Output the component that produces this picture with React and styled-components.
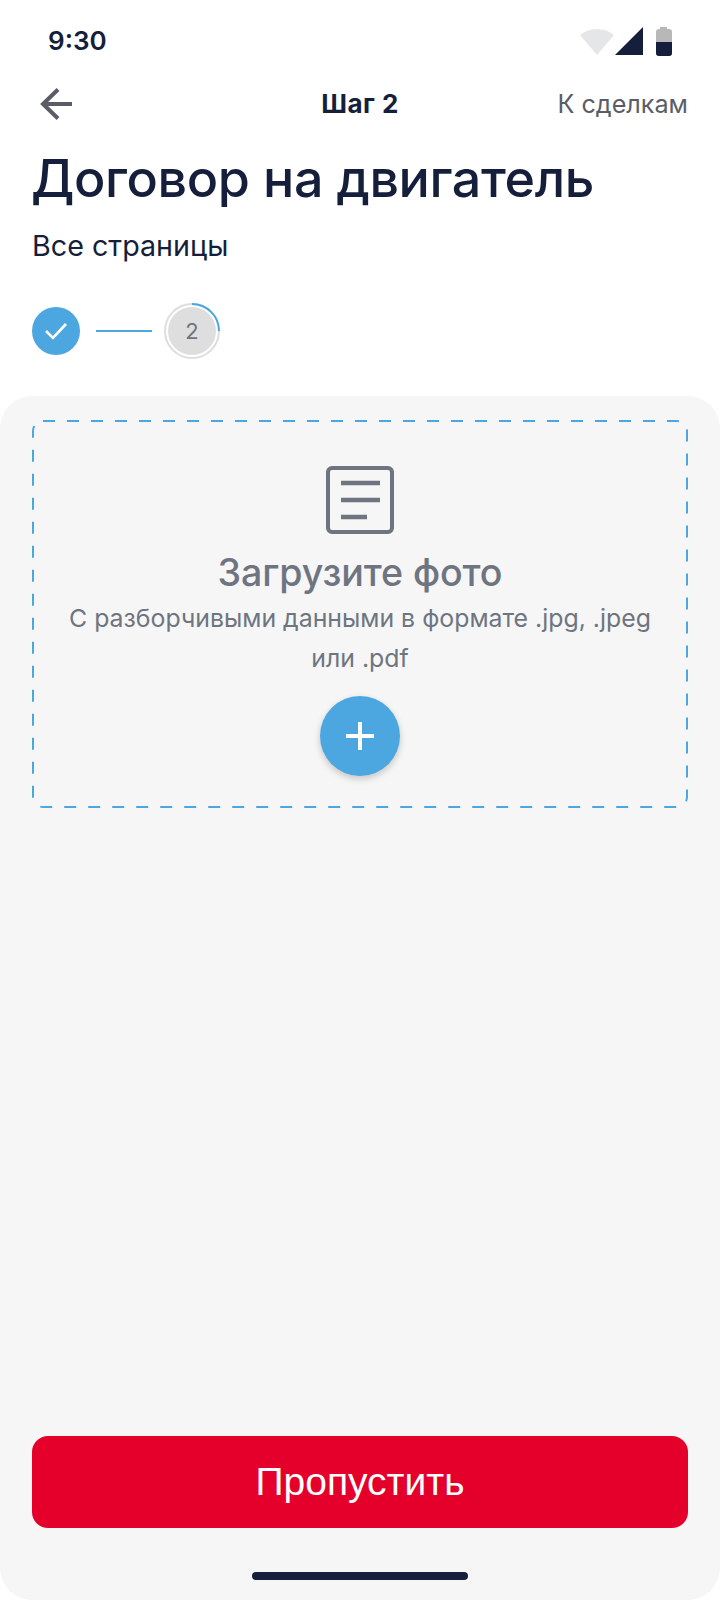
import React from "react";
import styled, { createGlobalStyle } from "styled-components";

const Global = createGlobalStyle`
  html, body { margin: 0; padding: 0; background: #fff; }
  * { box-sizing: border-box; }
  body { font-family: Inter, "Liberation Sans", sans-serif; -webkit-font-smoothing: antialiased; }
`;
const Page = styled.div`
  width: 720px; height: 1600px; display: flex; flex-direction: column; background: #fff; color: #151e3a;
`;
const StatusBar = styled.div`
  height: 84px; padding: 26px 48px 0 48px; display: flex; justify-content: space-between; align-items: flex-start;
`;
const Clock = styled.div`
  font-size: 26px; line-height: 30px; font-weight: 600;
`;
const NavBar = styled.div`
  height: 40px; padding: 0 32px 0 40px; display: grid; grid-template-columns: 150px 1fr 150px; align-items: center;
`;
const BackLink = styled.button`
  border: 0; background: none; padding: 0; width: 32px; height: 32px; display: block;
`;
const StepName = styled.div`
  font-size: 26px; font-weight: 700; line-height: 32px; text-align: center; letter-spacing: 0.5px; padding-right: 8px;
`;
const DealsLink = styled.div`
  justify-self: end; font-size: 25.2px; line-height: 32px; color: #5a5d66; white-space: nowrap;
`;
const Title = styled.h1`
  margin: 23px 0 0 -1px; padding: 0 32px; font-size: 52px; line-height: 64px; font-weight: 500; letter-spacing: -0.4px;
  white-space: nowrap;
`;
const Subtitle = styled.div`
  margin-top: 17px; padding: 0 32px; font-size: 28.7px; line-height: 36px;
`;
const Stepper = styled.div`
  margin-top: 37px; padding: 0 32px; display: flex; align-items: center; height: 60px;
`;
const DoneStep = styled.div`
  width: 48px; height: 48px; border-radius: 50%; background: #4ca7e0; display: flex; align-items: center; justify-content: center;
`;
const Connector = styled.div`
  width: 56px; height: 2px; margin: 0 12px 0 16px; background: #4ca7e0;
`;
const CurrentStep = styled.div`
  position: relative; width: 56px; height: 56px; display: flex; align-items: center; justify-content: center;
`;
const Ring = styled.svg`
  position: absolute; inset: 0;
`;
const StepNumber = styled.div`
  width: 48px; height: 48px; border-radius: 50%; background: #dedede; color: #6e7580;
  font-size: 22px; display: flex; align-items: center; justify-content: center;
`;
const Panel = styled.div`
  margin-top: 35px; flex: 1; background: #f6f6f6; border-radius: 32px; padding: 24px 32px 20px;
  display: flex; flex-direction: column;
`;
const Dropzone = styled.div`
  position: relative; height: 388px; padding-top: 46px; display: flex; flex-direction: column; align-items: center;
`;
const DashedOutline = styled.svg`
  position: absolute; inset: 0;
`;
const DropTitle = styled.div`
  margin-top: 17px; font-size: 37.6px; line-height: 44px; font-weight: 500; color: #6e7580; letter-spacing: -0.1px;
`;
const DropText = styled.div`
  width: 620px; margin-top: 3px; font-size: 24.85px; line-height: 40px; text-align: center; color: #6e7580;
`;
const AddButton = styled.button`
  margin-top: 18px; width: 80px; height: 80px; border: 0; border-radius: 50%; padding: 0; background: #4ca7e0;
  box-shadow: 0 3px 7px rgba(0,0,0,.2); display: flex; align-items: center; justify-content: center;
`;
const SkipButton = styled.button`
  margin-top: auto; width: 100%; height: 92px; border: 0; border-radius: 16px; background: #e4002b; color: #fff;
  font-family: "Liberation Sans", Arial, sans-serif; font-size: 39px;
`;
const HomeBar = styled.div`
  margin: 44px auto 0; width: 216px; height: 8px; border-radius: 4px; background: #151e3a;
`;

export default function App() {
  return (
    <Page>
      <Global />
      <StatusBar>
        <Clock>9:30</Clock>
        <svg width="92" height="32" viewBox="0 0 92 32">
          <path d="M0 9 C9 1 25 1 34 9 L17 29 Z" fill="#e5e6e8" />
          <path d="M35 29 L63 1 V29 Z" fill="#151e3a" />
          <path d="M80 3 V1 H87 V3 H89 Q92 3 92 6 V27 Q92 30 89 30 H79 Q76 30 76 27 V6 Q76 3 79 3 Z" fill="#b8b8b8" />
          <path d="M76 16 H92 V27 Q92 30 89 30 H79 Q76 30 76 27 Z" fill="#151e3a" />
        </svg>
      </StatusBar>
      <NavBar>
        <BackLink aria-label="Назад">
          <svg width="32" height="32" viewBox="0 0 32 32" fill="none">
            <path d="M32 16 H3 M18 1.5 L3 16 L18 30.5" stroke="#5a5d66" strokeWidth="4" />
          </svg>
        </BackLink>
        <StepName>Шаг 2</StepName>
        <DealsLink>К сделкам</DealsLink>
      </NavBar>
      <Title>Договор на двигатель</Title>
      <Subtitle>Все страницы</Subtitle>
      <Stepper>
        <DoneStep>
          <svg width="24" height="20" viewBox="0 0 24 20" fill="none">
            <path d="M2 10 L9 17 L22 3" stroke="#fff" strokeWidth="2.6" />
          </svg>
        </DoneStep>
        <Connector />
        <CurrentStep>
          <Ring width="56" height="56" viewBox="0 0 56 56" fill="none">
            <circle cx="28" cy="28" r="27" stroke="#dedede" strokeWidth="2" />
            <path d="M28 1 A27 27 0 0 1 55 28" stroke="#4ca7e0" strokeWidth="2" />
          </Ring>
          <StepNumber>2</StepNumber>
        </CurrentStep>
      </Stepper>
      <Panel>
        <Dropzone>
          <DashedOutline width="656" height="388" viewBox="0 0 656 388" fill="none">
            <rect x="1" y="1" width="654" height="386" rx="10" stroke="#4ca7e0" strokeWidth="2" strokeDasharray="12 12" />
          </DashedOutline>
          <svg width="68" height="68" viewBox="0 0 68 68" fill="none">
            <rect x="2" y="2" width="64" height="64" rx="4" stroke="#6e7580" strokeWidth="4" />
            <path d="M15 17 H54 M15 34 H54 M15 51 H41" stroke="#6e7580" strokeWidth="4.6" />
          </svg>
          <DropTitle>Загрузите фото</DropTitle>
          <DropText>С разборчивыми данными в формате .jpg, .jpeg или .pdf</DropText>
          <AddButton aria-label="Добавить">
            <svg width="28" height="28" viewBox="0 0 28 28" fill="none">
              <path d="M14 0 V28 M0 14 H28" stroke="#fff" strokeWidth="4" />
            </svg>
          </AddButton>
        </Dropzone>
        <SkipButton>Пропустить</SkipButton>
        <HomeBar />
      </Panel>
    </Page>
  );
}
